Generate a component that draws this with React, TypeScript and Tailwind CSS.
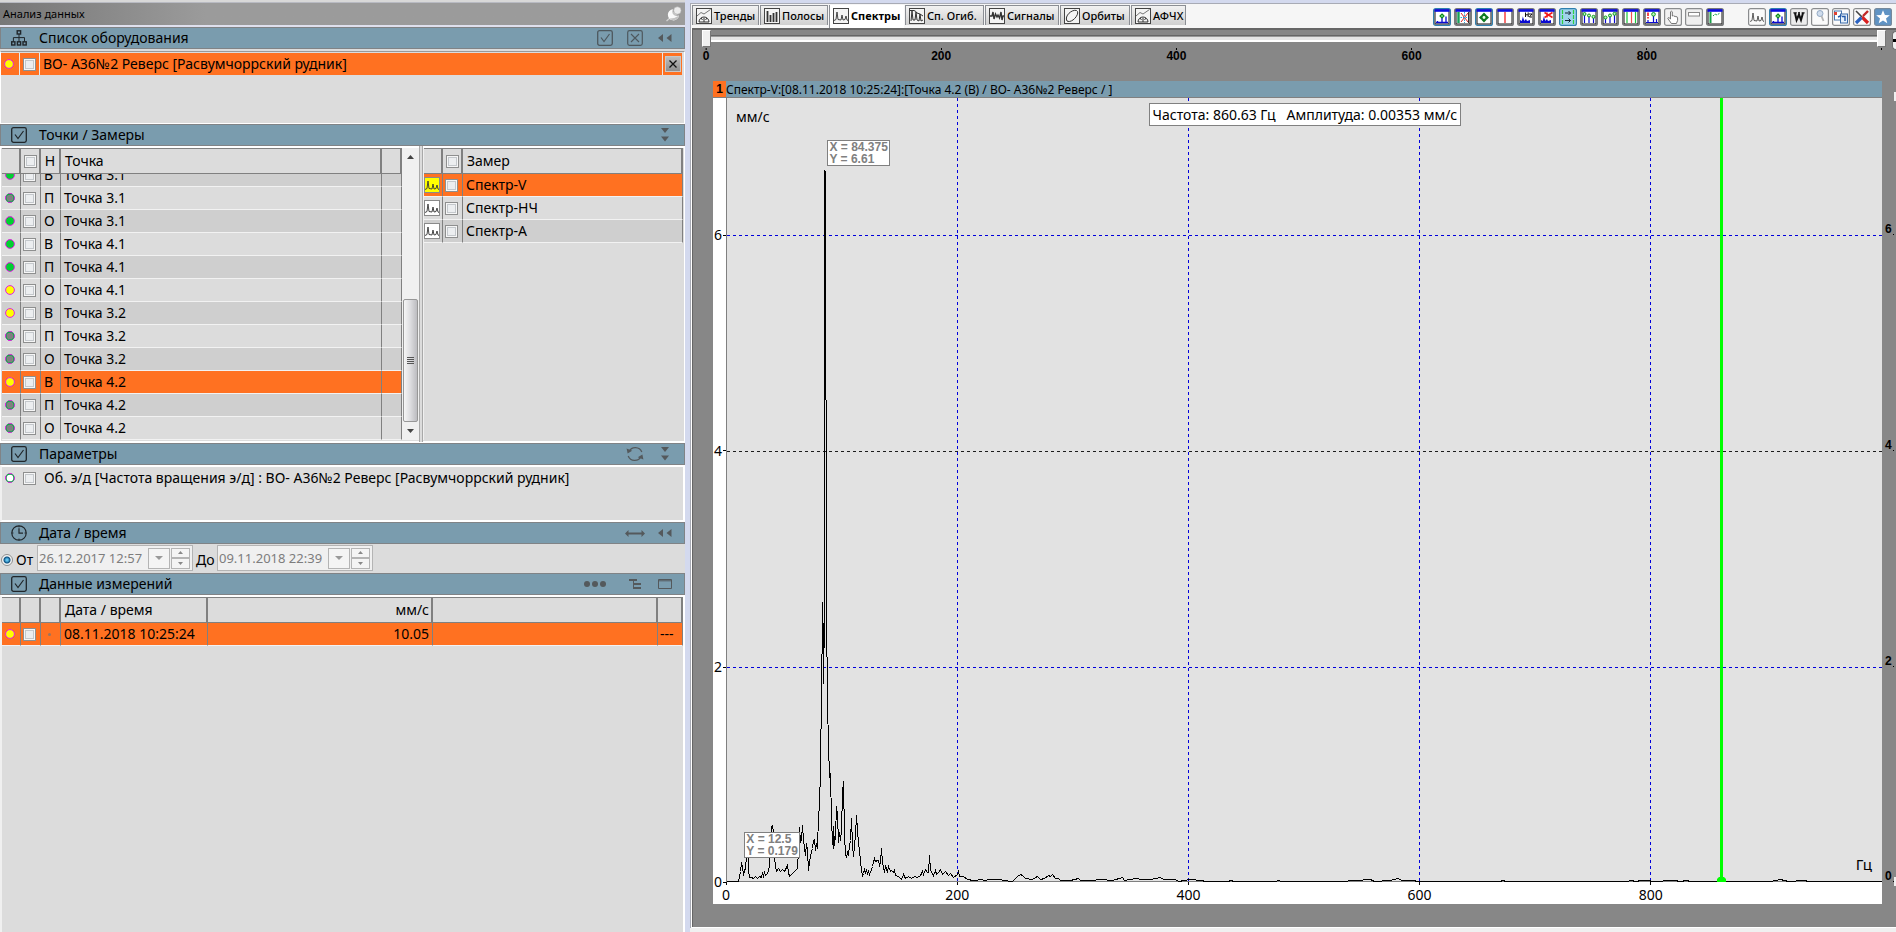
import React, { useId, useState } from "react";

/* ---------- shared pieces ---------- */

const headerText = "text-[14px] leading-5";

function Check({ label }: { label: string }) {
  return (
    <input
      type="checkbox"
      aria-label={label}
      className="block size-[13px] shrink-0 appearance-none border border-[#8e8f8f] bg-[#eceef0] shadow-[inset_0_0_0_1px_#f6f6f6,inset_0_0_0_2px_#c4c8cc] checked:bg-[#4a6c80]"
    />
  );
}

type Tone = "green" | "gray" | "yellow" | "white";

const fills: Record<Tone, string> = {
  green: "#00d030",
  gray: "#808080",
  yellow: "#ffff00",
  white: "#ffffff",
};

function Dot({ tone }: { tone: Tone }) {
  const ringed = tone === "gray" || tone === "white";
  return (
    <svg viewBox="0 0 10 10" className="block size-[10px] shrink-0" aria-hidden="true">
      <circle cx="5" cy="5" r="4.4" fill={fills[tone]} stroke="#e31ee3" />
      {ringed && <circle cx="5" cy="5" r="3.9" fill="none" stroke="#00b840" strokeWidth="1.1" />}
      {ringed && <circle cx="5" cy="5" r="4.5" fill="none" stroke="#e31ee3" strokeDasharray="3.5 3.6" strokeDashoffset="1.7" />}
    </svg>
  );
}

function BoxCheckIcon({ color = "#20262a" }: { color?: string }) {
  return (
    <svg viewBox="0 0 16 16" className="size-4" fill="none" stroke={color} aria-hidden="true">
      <rect x="0.7" y="0.7" width="14.6" height="14.6" rx="1.8" strokeWidth="1.3" />
      <path d="M4 7.5 L7 11.5 L12.5 4" strokeWidth="1.2" />
    </svg>
  );
}

function BoxCrossIcon() {
  return (
    <svg viewBox="0 0 16 16" className="size-4" fill="none" stroke="#4e585e" aria-hidden="true">
      <rect x="0.7" y="0.7" width="14.6" height="14.6" rx="1.8" strokeWidth="1.2" />
      <path d="M4 4 L12 12 M12 4 L4 12" strokeWidth="1.1" />
    </svg>
  );
}

function OrgIcon() {
  return (
    <svg viewBox="0 0 16 16" className="size-4" fill="none" stroke="#20262a" strokeWidth="1.4" aria-hidden="true">
      <rect x="6.2" y="0.8" width="3.4" height="3.2" />
      <rect x="0.7" y="11.8" width="3.2" height="3.2" />
      <rect x="6.4" y="11.8" width="3.2" height="3.2" />
      <rect x="12" y="11.8" width="3.2" height="3.2" />
      <path d="M8 4 V11.5 M2.4 11.5 V7.6 H13.5 V11.5" strokeWidth="1" />
    </svg>
  );
}

function ClockIcon() {
  return (
    <svg viewBox="0 0 16 16" className="size-4" fill="none" stroke="#20262a" strokeWidth="1.2" aria-hidden="true">
      <circle cx="8" cy="8" r="7.2" />
      <path d="M8 3.2 V8.2 H12" />
      <path d="M8 .8v1.6M8 13.6v1.6M.8 8h1.6M13.6 8h1.6" strokeWidth="1" />
    </svg>
  );
}

function DoubleLeft() {
  return (
    <svg viewBox="0 0 14 8" className="h-2 w-[14px]" fill="#54595c" aria-hidden="true">
      <path d="M5 0 V8 L0 4 Z M13.5 0 V8 L8.5 4 Z" />
    </svg>
  );
}

function DoubleDown() {
  return (
    <svg viewBox="0 0 8 14" className="h-[14px] w-2" fill="#54595c" aria-hidden="true">
      <path d="M0 0 H8 L4 5 Z M0 8.5 H8 L4 13.5 Z" />
    </svg>
  );
}

function RefreshIcon() {
  return (
    <svg viewBox="0 0 18 18" className="size-[18px]" fill="none" stroke="#54595c" strokeWidth="1.3" aria-hidden="true">
      <path d="M3 6.5 A7 7 0 0 1 15.8 7 M15 11.5 A7 7 0 0 1 2.2 11" />
      <path d="M.6 3.5 L1.6 8.6 L6.2 5.8 Z M17.4 14.5 L16.4 9.4 L11.8 12.2 Z" fill="#54595c" stroke="none" />
    </svg>
  );
}

function WideArrow() {
  return (
    <svg viewBox="0 0 20 7" className="h-[7px] w-5" fill="#54595c" aria-hidden="true">
      <path d="M0 3.5 L3.5 0 V2.6 H16.5 V0 L20 3.5 L16.5 7 V4.4 H3.5 V7 Z" />
    </svg>
  );
}

function DotsIcon() {
  return (
    <svg viewBox="0 0 22 6" className="h-[6px] w-[22px]" fill="#54595c" aria-hidden="true">
      <circle cx="3" cy="3" r="3" />
      <circle cx="11" cy="3" r="3" />
      <circle cx="19" cy="3" r="3" />
    </svg>
  );
}

function TreeIcon() {
  return (
    <svg viewBox="0 0 12 10" className="h-[10px] w-3" fill="#54595c" aria-hidden="true">
      <path d="M0 0 H8 V2 H0 Z M5 4 H12 V6 H5 Z M5 8 H12 V10 H5 Z M4 2 H5 V10 H4 Z" />
    </svg>
  );
}

function WindowIcon() {
  return (
    <svg viewBox="0 0 14 10" className="h-[10px] w-[14px]" fill="none" stroke="#54595c" aria-hidden="true">
      <path d="M.5 .5 H13.5 V9.5 H.5 Z M0 1.8 H14" />
    </svg>
  );
}

function PinIcon() {
  return (
    <svg viewBox="0 0 16 16" className="size-4" aria-hidden="true">
      <path d="M0.5 15 L4.5 11.5" stroke="#d0d0d0" strokeWidth="1.4" />
      <path d="M7 3.2 A5.6 5.6 0 1 0 13 9.5 Q8.5 10.5 6.8 7.5 Q6 5.2 7 3.2 Z" fill="#fafafa" />
      <path d="M3.4 12.4 A5.6 5.6 0 0 0 13 9.5 Q9 12.6 3.4 12.4 Z" fill="#c4c4c4" />
      <path d="M7.4 6 L10.4 9" stroke="#c8c8c8" strokeWidth="2.6" />
      <circle cx="11.4" cy="4.5" r="3.7" fill="#ececec" stroke="#b0b0b0" strokeWidth=".6" />
    </svg>
  );
}

type Action = { label: string; icon: React.ReactNode; wide?: boolean };

function SectionHeader({ icon, title, actions }: { icon: React.ReactNode; title: string; actions: Action[] }) {
  return (
    <header className="flex h-[22px] shrink-0 items-center border border-[#808386] bg-[#7a9cae] pr-1 pl-[10px]">
      {icon}
      <h2 className={`ml-3 ${headerText}`}>{title}</h2>
      <div className="ml-auto flex">
        {actions.map((a) => (
          <button
            key={a.label}
            type="button"
            aria-label={a.label}
            className={`flex h-5 items-center justify-center ${a.wide ? "w-[50px]" : "w-[30px]"}`}
          >
            {a.icon}
          </button>
        ))}
      </div>
    </header>
  );
}

/* ---------- left panel ---------- */

const points: { tone: Tone; dir: string; name: string; selected?: boolean }[] = [
  { tone: "green", dir: "В", name: "Точка 3.1" },
  { tone: "gray", dir: "П", name: "Точка 3.1" },
  { tone: "green", dir: "О", name: "Точка 3.1" },
  { tone: "green", dir: "В", name: "Точка 4.1" },
  { tone: "green", dir: "П", name: "Точка 4.1" },
  { tone: "yellow", dir: "О", name: "Точка 4.1" },
  { tone: "yellow", dir: "В", name: "Точка 3.2" },
  { tone: "gray", dir: "П", name: "Точка 3.2" },
  { tone: "gray", dir: "О", name: "Точка 3.2" },
  { tone: "yellow", dir: "В", name: "Точка 4.2", selected: true },
  { tone: "gray", dir: "П", name: "Точка 4.2" },
  { tone: "gray", dir: "О", name: "Точка 4.2" },
];

const measures = ["Спектр-V", "Спектр-НЧ", "Спектр-А"];

const headCell = "h-[26px] border-y border-r-2 border-[#808080] p-0 font-normal";
const cell = "h-[23px] border-r border-b border-r-[#808080] border-b-[#f2f2f2] p-0";
const markBox = "flex justify-center pr-[2px]";

function PointColumns() {
  return (
    <colgroup>
      <col className="w-[19px]" />
      <col className="w-5" />
      <col className="w-5" />
      <col />
      <col className="w-5" />
    </colgroup>
  );
}

function PointsList() {
  return (
    <div className="flex min-w-0 flex-[1_1_400px] flex-col">
      <table className="w-full table-fixed border-separate border-spacing-0 text-[14px] leading-5">
        <PointColumns />
        <thead>
          <tr>
            <th className={headCell} aria-label="Состояние" />
            <th className={headCell}>
              <div className="flex justify-center">
                <Check label="Выбрать все точки" />
              </div>
            </th>
            <th className={headCell}>Н</th>
            <th className={`${headCell} pl-1 text-left`}>Точка</th>
            <th className={`${headCell} border-r`} aria-label="Дополнительно" />
          </tr>
        </thead>
      </table>
      <div className="flex min-h-0 flex-1 flex-col justify-end overflow-hidden">
        <table className="w-full shrink-0 table-fixed border-separate border-spacing-0 text-[14px] leading-5">
          <PointColumns />
          <tbody>
            {points.map((p, i) => (
              <tr key={i} className={p.selected ? "bg-[#ff7121]" : i % 2 ? "bg-[#dcdcdc]" : "bg-[#cfcfcf]"}>
                <td className={cell}>
                  <div className={markBox}>
                    <Dot tone={p.tone} />
                  </div>
                </td>
                <td className={cell}>
                  <div className={markBox}>
                    <Check label={`${p.dir} ${p.name}`} />
                  </div>
                </td>
                <td className={`${cell} pl-[3px]`}>{p.dir}</td>
                <td className={`${cell} pl-[3px]`}>{p.name}</td>
                <td className={cell} />
              </tr>
            ))}
          </tbody>
        </table>
      </div>
    </div>
  );
}

function ScrollBar() {
  return (
    <div className="flex w-[17px] shrink-0 flex-col items-center bg-[#f0f0f0]">
      <button type="button" aria-label="Вверх" className="flex h-[18px] w-full items-center justify-center">
        <svg viewBox="0 0 7 4" className="h-1 w-[7px]" aria-hidden="true">
          <path d="M0 4 L3.5 0 L7 4 Z" fill="#444" />
        </svg>
      </button>
      <div className="flex-[134]" />
      <div className="flex w-[15px] flex-[122] items-center justify-center rounded-xs border border-[#979797] bg-linear-to-r from-[#f6f6f6] via-[#dcdcdf] to-[#bcbcc0]">
        <div className="flex flex-col gap-px">
          <span className="h-px w-[7px] bg-[#555]" />
          <span className="h-px w-[7px] bg-[#555]" />
          <span className="h-px w-[7px] bg-[#555]" />
          <span className="h-px w-[7px] bg-[#555]" />
        </div>
      </div>
      <button type="button" aria-label="Вниз" className="flex h-[18px] w-full items-center justify-center">
        <svg viewBox="0 0 7 4" className="h-1 w-[7px]" aria-hidden="true">
          <path d="M0 0 L3.5 4 L7 0 Z" fill="#444" />
        </svg>
      </button>
    </div>
  );
}

function MiniSpectrum({ active }: { active: boolean }) {
  return (
    <svg viewBox="0 0 16 16" className="block size-4" aria-hidden="true">
      <rect x=".5" y=".5" width="15" height="15" fill={active ? "#ffff00" : "#fff"} stroke="#8a8a8a" />
      <path d="M1 12.5 L3 11.5 L4 4 L5 11.5 L8 12 L9 7 L10 12 L12 11.5 L13 8 L14 12 L15 12.5" fill="none" stroke="#333" strokeWidth=".9" />
    </svg>
  );
}

function MeasuresList() {
  return (
    <div className="min-w-0 flex-[1_1_261px] border-l border-[#f0f0f0] pr-px">
      <table className="w-full table-fixed border-separate border-spacing-0 text-[14px] leading-5">
        <colgroup>
          <col className="w-[19px]" />
          <col className="w-5" />
          <col />
        </colgroup>
        <thead>
          <tr>
            <th className={headCell} aria-label="Вид" />
            <th className={headCell}>
              <div className="flex justify-center">
                <Check label="Выбрать все замеры" />
              </div>
            </th>
            <th className={`${headCell} border-r pl-1 text-left`}>Замер</th>
          </tr>
        </thead>
        <tbody>
          {measures.map((m, i) => (
            <tr key={m} className={i === 0 ? "bg-[#ff7121]" : i % 2 ? "bg-[#dcdcdc]" : "bg-[#cfcfcf]"}>
              <td className={cell}>
                <MiniSpectrum active={i === 0} />
              </td>
              <td className={cell}>
                <div className={markBox}>
                  <Check label={m} />
                </div>
              </td>
              <td className={`${cell} pl-[3px]`}>{m}</td>
            </tr>
          ))}
        </tbody>
      </table>
    </div>
  );
}

function DateField({ label, value }: { label: string; value: string }) {
  const id = useId();
  return (
    <>
      <label htmlFor={id} className="mt-[5px] w-[18px] leading-5">
        {label}
      </label>
      <div className="flex h-[26px] w-[156px] items-center border border-[#b4b4b4] bg-[#f0f0f0] pr-[2px] pl-[1px]">
        <input id={id} defaultValue={value} className="w-0 min-w-0 flex-1 bg-transparent text-[13px] leading-5 text-[#7d7d7d] outline-none" />
        <button type="button" aria-label="Открыть календарь" className="flex h-[21px] w-[22px] items-center justify-center border border-[#b4b4b4] bg-[#f4f4f4]">
          <svg viewBox="0 0 8 4" className="h-1 w-2" aria-hidden="true">
            <path d="M0 0 H8 L4 4 Z" fill="#999" />
          </svg>
        </button>
        <div className="ml-[1px] flex h-[21px] w-[19px] flex-col">
          <button type="button" aria-label="Больше" className="flex flex-1 items-center justify-center border border-[#b4b4b4] bg-[#f4f4f4]">
            <svg viewBox="0 0 5 3" className="h-[3px] w-[5px]" aria-hidden="true">
              <path d="M0 3 H5 L2.5 0 Z" fill="#888" />
            </svg>
          </button>
          <button type="button" aria-label="Меньше" className="flex flex-1 items-center justify-center border border-[#b4b4b4] bg-[#f4f4f4]">
            <svg viewBox="0 0 5 3" className="h-[3px] w-[5px]" aria-hidden="true">
              <path d="M0 0 H5 L2.5 3 Z" fill="#888" />
            </svg>
          </button>
        </div>
      </div>
    </>
  );
}

function LeftPanel() {
  return (
    <aside className="flex w-[685px] shrink-0 flex-col bg-[#dcdcdc] text-[14px]">
      <div className="h-[3px] shrink-0 border-b border-[#b8bac2] bg-[#d8d8d8]" />
      <div className="flex h-[22px] shrink-0 items-center justify-between bg-linear-to-r from-[#777] via-[#9b9b9b] via-30% to-[#9b9b9b] pr-[3px] pl-[3px]">
        <h1 className="text-[11px] leading-4">Анализ данных</h1>
        <button type="button" aria-label="Закрепить">
          <PinIcon />
        </button>
      </div>
      <div className="h-[2px] shrink-0 bg-[#dfe0ee]" />

      <SectionHeader
        icon={<OrgIcon />}
        title="Список оборудования"
        actions={[
          { label: "Выбрать все", icon: <BoxCheckIcon color="#4e585e" /> },
          { label: "Снять выбор", icon: <BoxCrossIcon /> },
          { label: "Свернуть список", icon: <DoubleLeft /> },
        ]}
      />
      <section className="mt-[2px] h-[73px] shrink-0 border border-t-[#999] border-r-white border-b-white border-l-white pt-px pr-[2px]">
        <div className="flex h-[22px] items-stretch bg-[#ff7121]">
          <div className="flex w-[19px] items-center justify-center border-r border-[#e8e8e8] pr-[2px]">
            <Dot tone="yellow" />
          </div>
          <div className="flex w-5 items-center justify-center border-r border-[#e8e8e8] pr-px">
            <Check label="ВО- А36№2 Реверс" />
          </div>
          <div className="flex-1 truncate pl-[3px] leading-[22px]">ВО- А36№2 Реверс [Расвумчоррский рудник]</div>
          <div className="flex w-5 items-center justify-center border-l border-[#e8e8e8]">
            <button
              type="button"
              aria-label="Убрать"
              className="flex size-4 items-center justify-center border border-[#c8c8c8] bg-linear-to-b from-[#bdbdbd] to-[#8e8e8e]"
            >
              <svg viewBox="0 0 8 8" className="size-2" stroke="#111" strokeWidth="1.3" aria-hidden="true">
                <path d="M.5 .5 L7.5 7.5 M7.5 .5 L.5 7.5" />
              </svg>
            </button>
          </div>
        </div>
      </section>

      <SectionHeader icon={<BoxCheckIcon />} title="Точки / Замеры" actions={[{ label: "Развернуть точки", icon: <DoubleDown /> }]} />
      <section className="flex h-[297px] shrink-0 border border-t-2 border-b-2 border-white pb-px pl-px">
        <PointsList />
        <ScrollBar />
        <div className="-my-0.5 w-[4px] shrink-0 border-x border-[#a9a9a9] bg-[#dcdcdc]" />
        <MeasuresList />
      </section>

      <SectionHeader
        icon={<BoxCheckIcon />}
        title="Параметры"
        actions={[
          { label: "Обновить", icon: <RefreshIcon /> },
          { label: "Развернуть параметры", icon: <DoubleDown /> },
        ]}
      />
      <section className="h-[57px] shrink-0 border-2 border-y-white border-r-white border-l-[#f0f0f0]">
        <div className="flex h-[22px] items-center pl-[3px]">
          <Dot tone="white" />
          <label className="ml-2 flex items-center gap-2">
            <Check label="Об. э/д" />
            <span className="leading-5 whitespace-nowrap">Об. э/д [Частота вращения э/д] : ВО- А36№2 Реверс [Расвумчоррский рудник]</span>
          </label>
        </div>
      </section>

      <SectionHeader
        icon={<ClockIcon />}
        title="Дата / время"
        actions={[
          { label: "Весь интервал", icon: <WideArrow /> },
          { label: "Свернуть дату", icon: <DoubleLeft /> },
        ]}
      />
      <section className="flex h-[29px] shrink-0 items-start gap-[3px] pt-[1px] pl-[1px]">
        <input
          type="radio"
          defaultChecked
          aria-label="Интервал дат"
          className="mt-[9px] size-3 shrink-0 appearance-none rounded-full border border-[#8e8f8f] bg-[radial-gradient(circle,#5fc4f0_0_1px,#0b4f80_3px,#f4f4f4_4px)]"
        />
        <DateField label="От" value="26.12.2017 12:57" />
        <DateField label="До" value="09.11.2018 22:39" />
      </section>

      <SectionHeader
        icon={<BoxCheckIcon />}
        title="Данные измерений"
        actions={[
          { label: "Ещё", icon: <DotsIcon />, wide: true },
          { label: "Дерево", icon: <TreeIcon /> },
          { label: "Окно", icon: <WindowIcon /> },
        ]}
      />
      <section className="min-h-0 flex-1 border-t-2 border-r-2 border-l-2 border-t-white border-r-white border-l-[#f0f0f0]">
        <table className="w-full table-fixed border-separate border-spacing-0 text-[14px] leading-5">
          <colgroup>
            <col className="w-[19px]" />
            <col className="w-5" />
            <col className="w-5" />
            <col className="w-[147px]" />
            <col className="w-[225px]" />
            <col />
            <col className="w-[25px]" />
          </colgroup>
          <thead>
            <tr>
              <th className={headCell} aria-label="Состояние" />
              <th className={headCell} aria-label="Выбор" />
              <th className={headCell} aria-label="Метка" />
              <th className={`${headCell} pl-1 text-left`}>Дата / время</th>
              <th className={`${headCell} pr-[2px] text-right`}>мм/с</th>
              <th className={headCell} aria-label="Примечание" />
              <th className={`${headCell} border-r`} aria-label="Прочее" />
            </tr>
          </thead>
          <tbody>
            <tr className="bg-[#ff7121]">
              <td className={cell}>
                <div className={markBox}>
                  <Dot tone="yellow" />
                </div>
              </td>
              <td className={cell}>
                <div className={markBox}>
                  <Check label="08.11.2018 10:25:24" />
                </div>
              </td>
              <td className={cell}>
                <div className={markBox}>
                  <span className="size-[3px] rounded-full bg-[#9a7560]" />
                </div>
              </td>
              <td className={`${cell} pl-[3px]`}>08.11.2018 10:25:24</td>
              <td className={`${cell} pr-[3px] text-right`}>10.05</td>
              <td className={cell} />
              <td className={`${cell} pl-[2px]`}>---</td>
            </tr>
          </tbody>
        </table>
      </section>
    </aside>
  );
}

/* ---------- tabs ---------- */

function TabIcon({ kind }: { kind: string }) {
  return (
    <svg viewBox="0 0 16 16" className="size-4 shrink-0" aria-hidden="true">
      <rect x=".5" y=".5" width="15" height="15" fill="#f4f4f4" stroke="#444" />
      <g fill="none" stroke="#333">
        {kind === "trend" && (
          <>
            <path d="M1 8 L5 4.5 L8 6 L14.5 1.5" stroke="#777" />
            <path d="M3 14 A5 5 0 0 1 13 14 Z M8 14 V10 M5 10 L6.5 12 M11 10 L9.5 12" />
          </>
        )}
        {kind === "bars" && <path d="M3.5 3 V14 M6.5 7 V14 M9.5 5 V14 M12.5 4 V14" strokeWidth="1.8" />}
        {kind === "spec" && <path d="M1 12.5 L3 11.5 L4 4 L5 11.5 L8 12 L9 7 L10 12 L12 11.5 L13 8 L14 12 L15 12.5" strokeWidth=".9" />}
        {kind === "env" && <path d="M1 2.5 H5 Q7 3 8 5 L11 6 L14 8 M2 13 L3 3 L4 12 L6 12 L7 4 L8 12 L10 13 L11 6 L12 13 L14 12" />}
        {kind === "sig" && <path d="M1 8 L3 8 L4 4 L5 11 L6.5 6 L8 9 L9 7 L10.5 10 L12 4 L13 12 L14 8 H15" strokeWidth="1.4" />}
        {kind === "orbit" && <path d="M3 13 C0 8 8 1 12.5 2.5 C17 5 8 16 3 13 Z" />}
      </g>
    </svg>
  );
}

const tabs = [
  { label: "Тренды", icon: "trend", width: "w-[67px]" },
  { label: "Полосы", icon: "bars", width: "w-[68px]" },
  { label: "Спектры", icon: "spec", width: "w-[75px]" },
  { label: "Сп. Огиб.", icon: "env", width: "w-[79px]" },
  { label: "Сигналы", icon: "sig", width: "w-[74px]" },
  { label: "Орбиты", icon: "orbit", width: "w-[70px]" },
  { label: "АФЧХ", icon: "trend", width: "w-[55px]" },
];

function Tabs() {
  const [active, setActive] = useState(2);
  return (
    <nav className="flex h-full shrink-0 items-start gap-px pt-[1px]">
      {tabs.map((t, i) => (
        <button
          key={t.label}
          type="button"
          onClick={() => setActive(i)}
          className={`flex items-center gap-[2px] border-l border-[#8b8e94] pl-[3px] leading-4 whitespace-nowrap ${t.width} ${
            i === active
              ? "h-[23px] bg-white pb-px text-[11px] font-bold"
              : "h-5 border-t border-r bg-linear-to-b from-[#f2f2f2] to-[#cfcfcf] text-[11px] font-medium"
          }`}
        >
          <TabIcon kind={t.icon} />
          {t.label}
        </button>
      ))}
    </nav>
  );
}

/* ---------- toolbar ---------- */

function Framed({ children, hot = false }: { children?: React.ReactNode; hot?: boolean }) {
  return (
    <>
      <rect x=".6" y=".6" width="16.8" height="16.8" rx="2" fill="#fff" stroke={hot ? "#2f7fae" : "#77797b"} strokeWidth="1.2" />
      <rect x="2" y="2" width="14" height="14" fill="#fff" stroke="#111" strokeWidth="1" />
      <rect x="1.5" y="1.2" width="15" height="2.6" fill="#0a0ae0" />
      {children}
    </>
  );
}

function Plain({ children, fill = "#ececec" }: { children?: React.ReactNode; fill?: string }) {
  return (
    <>
      <rect x=".6" y=".6" width="16.8" height="16.8" rx="2" fill={fill} stroke="#8a8c8e" strokeWidth="1.2" />
      {children}
    </>
  );
}

function PeakMarker() {
  return (
    <>
      <path d="M3 14.5 H15 M4.5 14.5 V13 M9 14.5 V10 M13 14.5 V8.5" stroke="#0a0ad0" strokeWidth="1.3" />
      <path d="M9 6 L11 8 L9 10 L7 8 Z" fill="#9fe89f" stroke="#0b8a1c" strokeWidth="1.2" />
    </>
  );
}

const tools: { label: string; art: React.ReactNode }[] = [
  { label: "Пиковый курсор", art: <Framed hot><PeakMarker /></Framed> },
  {
    label: "Разностный курсор",
    art: (
      <Framed>
        <path d="M4.5 4 V15" stroke="#18a058" strokeWidth="2.4" />
        <path d="M7 5 L14 14 M14 5 L7 14" stroke="#e02020" />
        <path d="M10.5 4 V15 M6.5 9.5 H15" stroke="#30a0d8" strokeDasharray="1.5 1" />
        <path d="M14.5 4 V15" stroke="#333" />
      </Framed>
    ),
  },
  {
    label: "Перемещение",
    art: (
      <Framed hot>
        <path d="M9 4.5 L11.2 6.8 V7.3 H11.7 L14 9.5 L11.7 11.7 H11.2 V12.2 L9 14.5 L6.8 12.2 V11.7 H6.3 L4 9.5 L6.3 7.3 H6.8 V6.8 Z" fill="#0d7a20" />
        <circle cx="9" cy="9.5" r="1.4" fill="#e8ffe8" />
      </Framed>
    ),
  },
  { label: "Линия", art: <Framed><path d="M9 4 V15" stroke="#f01010" strokeWidth="1.2" /></Framed> },
  {
    label: "Частота",
    art: (
      <Framed>
        <path d="M3 15 V12 L5 13 V8 L6 12 L7 9 V13 L9 11 L10 13 L13 12 V15 Z" fill="#0a0ad0" />
        <path d="M8.5 4.5 V9 M11.2 4.5 V9 M8.5 6.8 H11.2 M12 6 H15 L12.4 9 H15" stroke="#111" fill="none" />
      </Framed>
    ),
  },
  {
    label: "Сброс частоты",
    art: (
      <Framed>
        <path d="M3 15 V12 L5 13 V8 L6 12 L7 9 V13 L9 11 L10 13 L13 12 V15 Z" fill="#0a0ad0" />
        <path d="M6.5 4.5 L14.5 9.5 M14.5 4.5 L6.5 9.5 M9 4.5 V9.5" stroke="#f01818" strokeWidth="1.5" />
      </Framed>
    ),
  },
  {
    label: "Синхронизация",
    art: (
      <>
        <rect x=".6" y=".6" width="16.8" height="16.8" rx="2" fill="#9fd4ec" stroke="#2f7fae" strokeWidth="1.2" />
        <path d="M3.5 2 V16 M14.5 2 V16" stroke="#30d040" strokeWidth="1.2" strokeDasharray="4 1" />
        <path d="M6 5 H11.5 M9.5 3 L11.5 5 L9.5 7 M6 12.5 H11.5 M9.5 10.5 L11.5 12.5 L9.5 14.5" stroke="#123" fill="none" />
      </>
    ),
  },
  {
    label: "Гармоники",
    art: (
      <Framed>
        <path d="M4.5 6 V15 M9 8 V15 M13.5 9 V15" stroke="#0a0ad0" strokeWidth="1.2" />
        <g fill="#bff5bf" stroke="#0b9a1c"><circle cx="4.5" cy="6" r="1.5" /><circle cx="9" cy="7.5" r="1.5" /><circle cx="13.5" cy="8.8" r="1.5" /></g>
      </Framed>
    ),
  },
  {
    label: "Субгармоники",
    art: (
      <Framed>
        <path d="M4.5 10 V15 M9 8 V15 M13.5 6 V15" stroke="#0a0ad0" strokeWidth="1.2" />
        <g fill="#bff5bf" stroke="#0b9a1c"><circle cx="4.5" cy="9.5" r="1.5" /><circle cx="9" cy="7.5" r="1.5" /><circle cx="13.5" cy="5.8" r="1.5" /></g>
      </Framed>
    ),
  },
  {
    label: "Полоса",
    art: (
      <Framed>
        <path d="M5 4 V15 M13.5 4 V15" stroke="#18c838" strokeWidth="1.2" />
        <path d="M9.5 4 V15" stroke="#f05050" strokeWidth="1.2" />
      </Framed>
    ),
  },
  {
    label: "Пики",
    art: (
      <Framed>
        <path d="M3 14.5 H15 M5 14.5 V12 M10.5 14.5 V8 M13.5 14.5 V11" stroke="#0a0ad0" strokeWidth="1.2" />
        <path d="M5 4.5 V8 M5 9 V10.4" stroke="#f01010" strokeWidth="1.5" />
        <circle cx="10.5" cy="6.3" r="1.8" fill="#bff5bf" stroke="#0b9a1c" />
      </Framed>
    ),
  },
  {
    label: "Рука",
    art: (
      <Plain fill="#f2f2f2">
        <path d="M6.5 11 V3.8 Q7.4 2.6 8.3 3.8 V8 Q9.3 7 10 8.4 Q11.2 7.4 11.8 8.8 Q13.4 8.2 13.6 9.8 V12.5 L12.4 15.5 H7.4 L3.8 10.5 Q4 9.2 5.2 9.8 Z" fill="#fff" stroke="#666" strokeWidth=".9" />
      </Plain>
    ),
  },
  { label: "Строка", art: <Plain fill="#efefef"><rect x="3.5" y="4.5" width="11" height="3.5" fill="#fff" stroke="#888" /></Plain> },
  {
    label: "Тренд",
    art: (
      <Framed>
        <path d="M4.5 4 V15" stroke="#18a048" strokeWidth="2" />
        <path d="M7 8 L9 6 L11 7 L14 5" stroke="#18a048" fill="none" strokeDasharray="2 1" />
      </Framed>
    ),
  },
];

const tools2: { label: string; art: React.ReactNode }[] = [
  {
    label: "Спектр",
    art: (
      <Plain fill="#fafafa">
        <path d="M2 13.5 L4 12.5 L5 5 L6 12.5 L9 13 L10 8 L11 13 L13 12.5 L14 9 L15 13 L16 13.5" fill="none" stroke="#333" strokeWidth=".8" />
      </Plain>
    ),
  },
  { label: "Маркер", art: <Framed hot><PeakMarker /></Framed> },
  {
    label: "Word",
    art: (
      <Plain>
        <path d="M5 5 L6.6 12 L9 6.5 L11 12 L13 5" fill="none" stroke="#111" strokeWidth="2" />
        <path d="M3.4 4.8 H6.8 M8 4.8 H10 M11.6 4.8 H14.6" stroke="#111" strokeWidth="1.2" />
      </Plain>
    ),
  },
  {
    label: "Поиск",
    art: (
      <Plain fill="#fbfbfb">
        <circle cx="9" cy="5.5" r="3" fill="#cfdcec" stroke="#94aac4" />
        <path d="M10.5 8 L12.5 13" stroke="#b4b4b4" strokeWidth="1.8" />
      </Plain>
    ),
  },
  {
    label: "Копировать",
    art: (
      <Plain fill="#fbfbfb">
        <rect x="2.5" y="3" width="7" height="9" fill="#fff" stroke="#4a78b0" />
        <path d="M2 4 H5 V7 H2 Z" fill="#e04030" />
        <rect x="8.5" y="6" width="7" height="9" fill="#e6f0fa" stroke="#3a6aa8" />
        <path d="M6 9 L9.5 7.5 M10 8.5 H13 V13" stroke="#2258a8" strokeWidth="1.4" fill="none" />
      </Plain>
    ),
  },
  {
    label: "Настройки",
    art: (
      <Plain fill="#fbfbfb">
        <path d="M3 3 L9 9" stroke="#444" strokeWidth="1.6" />
        <path d="M9 9 L15 15" stroke="#d82020" strokeWidth="3.2" />
        <path d="M15 3 L10 8" stroke="#c02828" strokeWidth="2.4" />
        <path d="M8.5 9.5 L3 15" stroke="#2a62c0" strokeWidth="3.2" />
      </Plain>
    ),
  },
  {
    label: "Избранное",
    art: (
      <>
        <rect x=".6" y=".6" width="16.8" height="16.8" rx="2" fill="#5f93c4" stroke="#76899c" strokeWidth="1.2" />
        <path d="M9 2.2 L10.9 6.9 L15.8 7.2 L12 10.4 L13.3 15.3 L9 12.6 L4.7 15.3 L6 10.4 L2.2 7.2 L7.1 6.9 Z" fill="#fff" />
      </>
    ),
  },
];

function ToolGroup({ items }: { items: typeof tools }) {
  return (
    <div className="flex gap-[3px]">
      {items.map((t) => (
        <button key={t.label} type="button" aria-label={t.label} title={t.label} className="size-[18px]">
          <svg viewBox="0 0 18 18" className="size-[18px]" aria-hidden="true">
            {t.art}
          </svg>
        </button>
      ))}
    </div>
  );
}

/* ---------- chart ---------- */

const trace =
  "726,881 738,881 739,877 740,871 741,862 742,866 743,875 744,870 745,868 746,855 747,845 748,870 749,877 751,877 753,878 755,876 757,878 759,876 761,877 762,873 763,876 764,872 765,875 767,873 768,870 769,865 770,850 771,826 772,825 773,832 774,858 775,865 776,871 778,868 780,871 782,869 784,871 786,867 787,864 788,872 789,876 791,874 793,872 795,870 797,868 798,850 799,827 800,842 801,838 802,825 803,840 805,855 806,843 807,850 808,870 809,862 810,855 812,848 813,840 814,839 815,850 816,843 817,848 818,815 819,806 820,769 821,690 822,620 822,602 823,643 823,683 824,614 824,170 825,171 826,614 827,697 828,750 829,771 830,784 830,773 831,820 832,840 833,848 833,826 834,845 835,835 836,806 837,815 838,842 839,832 840,840 841,830 842,793 843,781 844,835 845,853 846,857 847,852 848,854 849,845 850,840 851,818 852,845 853,856 854,845 855,835 856,815 857,830 858,842 859,850 860,860 861,870 862,875 863,873 864,869 865,872 866,870 867,873 868,871 869,874 871,869 872,866 873,862 874,858 875,861 877,860 878,860 879,865 880,862 881,848 882,862 883,866 884,872 885,865 886,868 887,872 888,866 890,871 891,870 893,872 894,869 895,875 898,876 901,879 903,874 905,878 908,876 911,878 914,876 917,877 920,875 922,871 923,874 925,869 927,872 928,872 929,855 930,870 932,873 933,875 935,870 936,874 938,872 940,869 942,874 945,871 948,875 950,873 953,877 957,874 958,871 959,876 963,876 967,879 973,880 982,879 983,880 990,879 1000,879 1003,880 1012,881 1017,876 1020,874 1022,875 1025,878 1032,879 1037,876 1040,879 1044,878 1048,875 1050,876 1052,874 1055,878 1058,878 1060,880 1070,880 1078,878 1080,880 1092,880 1100,879 1112,880 1122,877 1124,880 1135,878 1142,879 1150,879 1160,877 1163,879 1175,879 1178,881 1190,879 1200,880 1206,881 1228,881 1230,880 1234,881 1275,881 1278,880 1281,881 1340,881 1356,880 1370,879 1374,881 1390,880 1397,878 1402,880 1412,880 1418,881 1500,881 1502,880 1506,881 1627,881 1630,880 1636,881 1640,880 1648,880 1652,881 1674,880 1680,881 1686,880 1690,881 1770,881 1780,879 1788,881 1804,880 1808,881 1882,881";

const gridX = [957, 1188, 1419, 1650];
const gridY = [235, 451, 667];

const axisX = [
  { t: "0", at: "left-[0%]" },
  { t: "200", at: "left-[20%]" },
  { t: "400", at: "left-[40%]" },
  { t: "600", at: "left-[60%]" },
  { t: "800", at: "left-[80%]" },
];

const axisY = [
  { t: "6", at: "top-[17.5%]" },
  { t: "4", at: "top-[45%]" },
  { t: "2", at: "top-[72.6%]" },
  { t: "0", at: "top-[100%]" },
];

function Chart() {
  return (
    <div className="flex min-h-0 flex-1">
      <section className="ml-5 flex min-w-0 flex-1 flex-col bg-white">
        <header className="flex h-[17px] shrink-0 border-b border-[#808080] bg-[#7a9cae]">
          <span className="w-[13px] bg-[#ff7121] text-center font-['Liberation_Sans',Arial,sans-serif] text-[12px] leading-[17px] font-bold">1</span>
          <h2 className="truncate text-[12px] leading-[17px]">Спектр-V:[08.11.2018 10:25:24]:[Точка 4.2 (В) / ВО- А36№2 Реверс / ]</h2>
        </header>
        <div className="flex min-h-0 flex-1">
          <div className="relative w-[13px] shrink-0">
            {axisY.map((a) => (
              <span key={a.t} className={`absolute right-0 flex -translate-y-1/2 items-center gap-px text-[14px] leading-4 ${a.at}`}>
                {a.t}
                <span className="h-px w-[3px] bg-black" />
              </span>
            ))}
          </div>
          <div className="relative min-w-0 flex-1 border-l border-[#808080] bg-[#e2e2e2]">
            <svg viewBox="727 98 1155 784" preserveAspectRatio="none" className="absolute inset-0 size-full" role="img" aria-label="Спектр виброскорости">
              <g stroke="#0000dc" strokeDasharray="3 3" shapeRendering="crispEdges">
                {gridX.map((x) => (
                  <path key={x} d={`M${x}.5 98 V881`} vectorEffect="non-scaling-stroke" />
                ))}
                {gridY.map((y) => (
                  <path key={y} d={`M727 ${y}.5 H1882`} vectorEffect="non-scaling-stroke" stroke={y === 451 ? "#1c1c1c" : "#0000dc"} />
                ))}
              </g>
              <path d="M727 881.5 H1882" stroke="#808080" vectorEffect="non-scaling-stroke" />
              <g transform="translate(.5 .5)">
                <polyline points={trace} fill="none" stroke="#000" shapeRendering="crispEdges" vectorEffect="non-scaling-stroke" />
              </g>
              <path d="M1721.5 98 V880" stroke="#00ff00" strokeWidth="3" vectorEffect="non-scaling-stroke" shapeRendering="crispEdges" />
              <path d="M1717 882 V879 L1719 877 H1724 L1726 879 V882 Z" fill="#00ff00" />
            </svg>
            <span className="absolute top-[9px] left-[9px] text-[14px] leading-5">мм/с</span>
            <span className="absolute right-[10px] bottom-[8px] text-[15px] leading-5">Гц</span>
            <output className="absolute top-[5px] left-[36.5%] h-[23px] border border-[#808080] bg-white px-[3px] text-[14px] leading-[21px] whitespace-pre">
              Частота: 860.63 Гц   Амплитуда: 0.00353 мм/с
            </output>
            <div className="absolute top-[5.4%] left-[8.7%] border border-[#808080] bg-white px-px font-['Liberation_Sans',Arial,sans-serif] text-[12px] leading-3 font-bold text-[#808080]">
              <p>X = 84.375</p>
              <p>Y = 6.61</p>
            </div>
            <div className="absolute bottom-[3%] left-[1.5%] border border-[#808080] bg-white px-px font-['Liberation_Sans',Arial,sans-serif] text-[12px] leading-3 font-bold text-[#808080]">
              <p>X = 12.5</p>
              <p>Y = 0.179</p>
            </div>
          </div>
        </div>
        <div className="relative ml-[13px] h-[22px] shrink-0">
          {axisX.map((a) => (
            <span key={a.t} className={`absolute top-0 flex -translate-x-1/2 flex-col items-center text-[14px] leading-5 ${a.at}`}>
              <span className="h-[3px] w-px bg-black" />
              <span>{a.t}</span>
            </span>
          ))}
        </div>
      </section>
      <div className="flex w-[14px] shrink-0 flex-col overflow-hidden pt-[17px] pb-[22px]">
        <div className="relative flex-1 font-['Liberation_Sans',Arial,sans-serif] text-[12px] leading-3 font-bold">
          {axisY.map((a) => (
            <span key={a.t} className={`absolute left-[3px] -mt-1.5 flex -translate-y-1/2 items-end gap-px ${a.at}`}>
              {a.t}
              <span className="size-px bg-black" />
            </span>
          ))}
          <span className="absolute -top-[6px] right-0 h-[9px] w-[2px] bg-[#f0f0f0]" />
          <span className="absolute right-0 -bottom-[4px] h-[9px] w-[2px] bg-[#f0f0f0]" />
        </div>
      </div>
    </div>
  );
}

const thumb =
  "pointer-events-none absolute inset-x-0 top-0 h-[17px] w-full appearance-none bg-transparent [&::-webkit-slider-thumb]:pointer-events-auto [&::-webkit-slider-thumb]:h-[17px] [&::-webkit-slider-thumb]:w-[9px] [&::-webkit-slider-thumb]:appearance-none [&::-webkit-slider-thumb]:border [&::-webkit-slider-thumb]:border-t-white [&::-webkit-slider-thumb]:border-l-white [&::-webkit-slider-thumb]:border-r-[#777] [&::-webkit-slider-thumb]:border-b-[#777] [&::-webkit-slider-thumb]:bg-[#f0f0f0]";

function RangeRuler() {
  return (
    <div className="flex h-[51px] shrink-0 overflow-hidden pl-[9px]">
      <div className="min-w-0 flex-1">
        <div className="relative h-[18px] px-[9px] pt-[5px]">
          <div className="h-[7px] border-t border-b-2 border-t-[#666] border-b-white bg-[#e6e6e6] shadow-[inset_0_1px_0_#999]" />
          <input type="range" min={0} max={1000} defaultValue={0} aria-label="Начало диапазона" className={thumb} />
          <input type="range" min={0} max={1000} defaultValue={1000} aria-label="Конец диапазона" className={thumb} />
        </div>
        <div className="relative mx-[4px] font-['Liberation_Sans',Arial,sans-serif] text-[12px] leading-3 font-bold">
          {axisX.map((a) => (
            <span key={a.t} className={`absolute top-0 flex -translate-x-1/2 flex-col items-center ${a.at}`}>
              <span className="h-[2px] w-px bg-black" />
              {a.t}
            </span>
          ))}
          <span className="absolute top-0 right-0 h-[2px] w-px bg-black" />
        </div>
      </div>
      <div className="flex w-[10px] shrink-0 justify-end">
        <button type="button" aria-label="Сдвиг" className="mt-px flex h-[19px] w-1 items-center justify-end rounded-l-sm border border-r-0 border-[#707070] bg-[#f0f0f0]">
          <span className="size-[3px] bg-black" />
        </button>
      </div>
    </div>
  );
}

export default function App() {
  return (
    <div className="flex h-screen min-h-[700px] w-full overflow-hidden bg-[#d3d9ee] font-['Noto_Sans','Open_Sans',sans-serif] text-black">
      <LeftPanel />
      <main className="ml-[5px] flex min-w-0 flex-1 flex-col pt-[3px]">
        <div className="flex h-[25px] shrink-0 items-center justify-between border-t border-l border-[#a8abb5] bg-[#f6f6f6] pr-1 pl-px">
          <Tabs />
          <div className="flex gap-6 pt-px">
            <ToolGroup items={tools} />
            <ToolGroup items={tools2} />
          </div>
        </div>
        <div className="flex min-h-0 flex-1 flex-col border-l border-[#a8abb5] bg-white pb-[1px] pl-px">
          <div className="flex min-h-0 flex-1 flex-col border-t-2 border-l border-[#666] bg-[#878787] pb-[23px]">
            <RangeRuler />
            <Chart />
          </div>
        </div>
        <div className="h-1 shrink-0 bg-[#f0f0f0]" />
      </main>
    </div>
  );
}
